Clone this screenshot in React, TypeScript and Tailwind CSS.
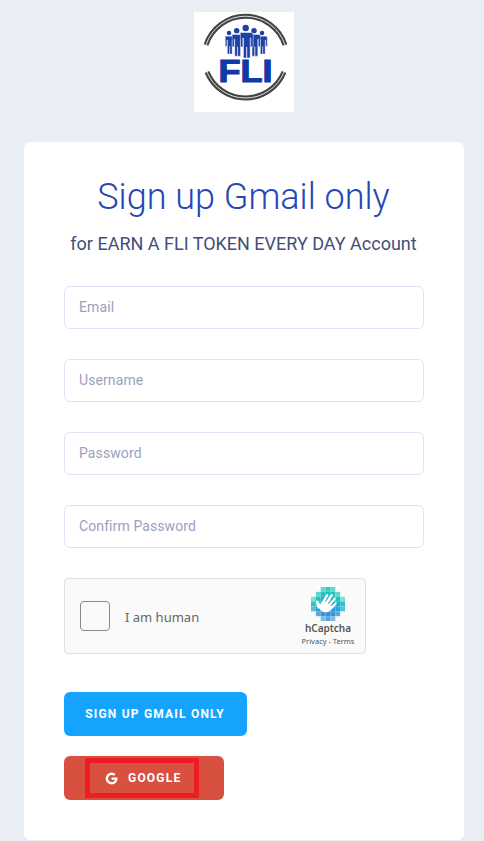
import { useState } from "react";

const fields = [
  { placeholder: "Email", type: "email" },
  { placeholder: "Username", type: "text" },
  { placeholder: "Password", type: "password" },
  { placeholder: "Confirm Password", type: "password" },
];

const logoRows = [
  { y: 0, x: 2, colors: ["#5fd9cd", "#36cdbf", "#5fd9cd"] },
  { y: 1, x: 1, colors: ["#5fd9cd", "#22c4bd", "#1fbfc0", "#22c4bd", "#5fd9cd"] },
  { y: 2, x: 0, colors: ["#7be0d6", "#23bfc2", "#1fb6c8", "#1eb0cc", "#1fb6c8", "#23bfc2", "#7be0d6"] },
  { y: 3, x: 0, colors: ["#37bfc8", "#1fb0cf", "#1ea8d3", "#1ea2d6", "#1ea8d3", "#1fb0cf", "#37bfc8"] },
  { y: 4, x: 0, colors: ["#5bbcd8", "#2ba3d6", "#2a9cd6", "#2b98d6", "#2a9cd6", "#2ba3d6", "#5bbcd8"] },
  { y: 5, x: 1, colors: ["#5ba8dc", "#3d95d6", "#3a90d4", "#3d95d6", "#5ba8dc"] },
  { y: 6, x: 2, colors: ["#80b8e2", "#5ba2da", "#80b8e2"] },
];

function HCaptchaLogo() {
  return (
    <svg width="34" height="34" viewBox="0 0 34 34" className="block">
      {logoRows.map((row) =>
        row.colors.map((color, i) => (
          <rect key={`${row.y}-${i}`} x={(row.x + i) * 4.86} y={row.y * 4.86} width="4.86" height="4.86" fill={color} />
        )),
      )}
      <path
        d="M7 22c-1.300-3-2.200-6.200-2-7.600.2-1.200 1.700-1.300 2.300-.2l1.900 3.200L15.400 7.600c.8-1.200 2.500-.3 1.900 1.100l-3.500 6 .7.500 5.400-7.700c.9-1.200 2.600-.2 1.900 1.100l-4.900 7.800.7.500 5.300-6c1-1.100 2.500 0 1.600 1.300l-5.100 6.500.6.600 4-3.600c1.100-1 2.300.2 1.500 1.400-2.200 2.900-4.900 6-7.500 7.300-4 1.900-8 .5-10-3.400z"
        fill="#fff"
      />
    </svg>
  );
}

function Person({ x, y, s }: { x: number; y: number; s: number }) {
  return (
    <g transform={`translate(${x} ${y}) scale(${s})`} fill="#1e40a8" stroke="#fff" strokeWidth="0.5">
      <circle cx="0" cy="-9" r="3.2" stroke="none" />
      <path d="M-6 -4.500h12l1.500 1.500v13h-2.400v-9h-.6v20h-3.400v-11h-.2v11h-3.200v-20h-.6v9h-2.400v-13z" />
    </g>
  );
}

function FliLogo() {
  return (
    <div className="w-[100px] h-[100px] bg-white">
      <svg width="100" height="100" viewBox="0 0 100 100" className="block">
        <g fill="none">
          <path d="M12 33A41.500 41.500 0 0 1 91 33" stroke="#444" strokeWidth="5" />
          <path d="M12 33A41.500 41.500 0 0 1 91 33" stroke="#ddd" strokeWidth="1" />
          <path d="M13 60A41.500 41.500 0 0 0 90 60" stroke="#444" strokeWidth="5" />
          <path d="M13 60A41.500 41.500 0 0 0 90 60" stroke="#ddd" strokeWidth="1" />
        </g>
        <Person x={35} y={27.3} s={0.7} />
        <Person x={68} y={27.3} s={0.7} />
        <Person x={42.700} y={26.300} s={0.85} />
        <Person x={60} y={26.300} s={0.85} />
        <Person x={51.700} y={25} s={1} />
        <text
          x="24.500"
          y="69.500"
          fill="#0f3aa5"
          stroke="#0f3aa5"
          strokeWidth="1.200"
          fontFamily="Liberation Sans, sans-serif"
          fontWeight="700"
          fontSize="32"
          textLength="54"
          lengthAdjust="spacingAndGlyphs"
        >
          FLI
        </text>
      </svg>
    </div>
  );
}

export default function App() {
  const [checked, setChecked] = useState(false);

  return (
    <div className="min-h-[841px] w-[484px] overflow-hidden bg-[#e9edf4] font-['Roboto',sans-serif]">
      <div className="flex w-[488px] flex-col items-center pt-3">
        <FliLogo />
      </div>

      <div className="ml-6 mt-[30px] h-[698px] w-[440px] rounded-[6px] bg-white px-10 pt-[34px]">
        <h1 className="pr-[1px] text-center text-[36px] leading-[42px] font-light text-[#2546b5]">Sign up Gmail only</h1>
        <p className="mt-[15px] pr-[1px] text-center text-[18px] leading-[21px] text-[#3f4f78]">for EARN A FLI TOKEN EVERY DAY Account</p>

        <form className="mt-[32px]" onSubmit={(e) => e.preventDefault()}>
          <div className="flex flex-col gap-[30px]">
            {fields.map((f) => (
              <input
                key={f.placeholder}
                type={f.type}
                placeholder={f.placeholder}
                className="h-[43px] w-full rounded-[6px] border border-[#dce4f5] bg-white px-[14px] pb-[2px] text-[14px] tracking-[0.1px] text-[#3f4f78] outline-none placeholder:text-[#9aa2bb]"
              />
            ))}
          </div>

          <div className="mt-[30px] flex h-[76px] w-[302px] items-center rounded-[4px] border border-[#e0e0e0] bg-[#fafafa] pl-[15px]">
            <button
              type="button"
              onClick={() => setChecked(!checked)}
              className="h-[30px] w-[30px] rounded-[4px] border border-[#8a8a8a] bg-[#fafafa]"
            />
            <span className="ml-[15px] mt-[3px] text-[13px] text-[#666] font-['Noto_Sans',sans-serif]">I am human</span>
            <div className="ml-auto mr-[9px] flex w-[56px] flex-col items-center">
              <HCaptchaLogo />
              <span className="mt-[1px] text-[10px] leading-[13px] font-semibold text-[#555] font-['Noto_Sans',sans-serif]">hCaptcha</span>
              <span className="mt-[1px] text-[7.500px] leading-[10px] whitespace-nowrap text-[#555] font-['Noto_Sans',sans-serif]">Privacy - Terms</span>
            </div>
          </div>

          <button
            type="submit"
            className="mt-[38px] block h-[44px] w-[183px] rounded-[6px] bg-[#16a3fe] pr-[1px] text-center text-[12px] font-bold tracking-[1.2px] text-white"
          >
            SIGN UP GMAIL ONLY
          </button>

          <div className="mt-5 flex h-[44px] w-[160px] items-center rounded-[6px] bg-[#d85140] pl-[21px]">
            <a className="flex h-[40px] w-[114px] items-center gap-[10px] border-[5px] border-[#ee1c25] pl-[15px] text-[12px] font-bold tracking-[1.2px] text-white">
              <svg width="13" height="13" viewBox="0 0 24 24" className="block shrink-0">
                <path
                  d="M12.200 10v4.300h6.300c-.6 2.800-3 4.200-6.300 4.200a6.500 6.500 0 1 1 4.300-11.400l3.200-3.200A11 11 0 1 0 12.200 23c6.400 0 10.800-4.500 10.800-10.800 0-.8-.1-1.500-.2-2.200z"
                  fill="#fff"
                />
              </svg>
              GOOGLE
            </a>
          </div>
        </form>
      </div>
    </div>
  );
}
